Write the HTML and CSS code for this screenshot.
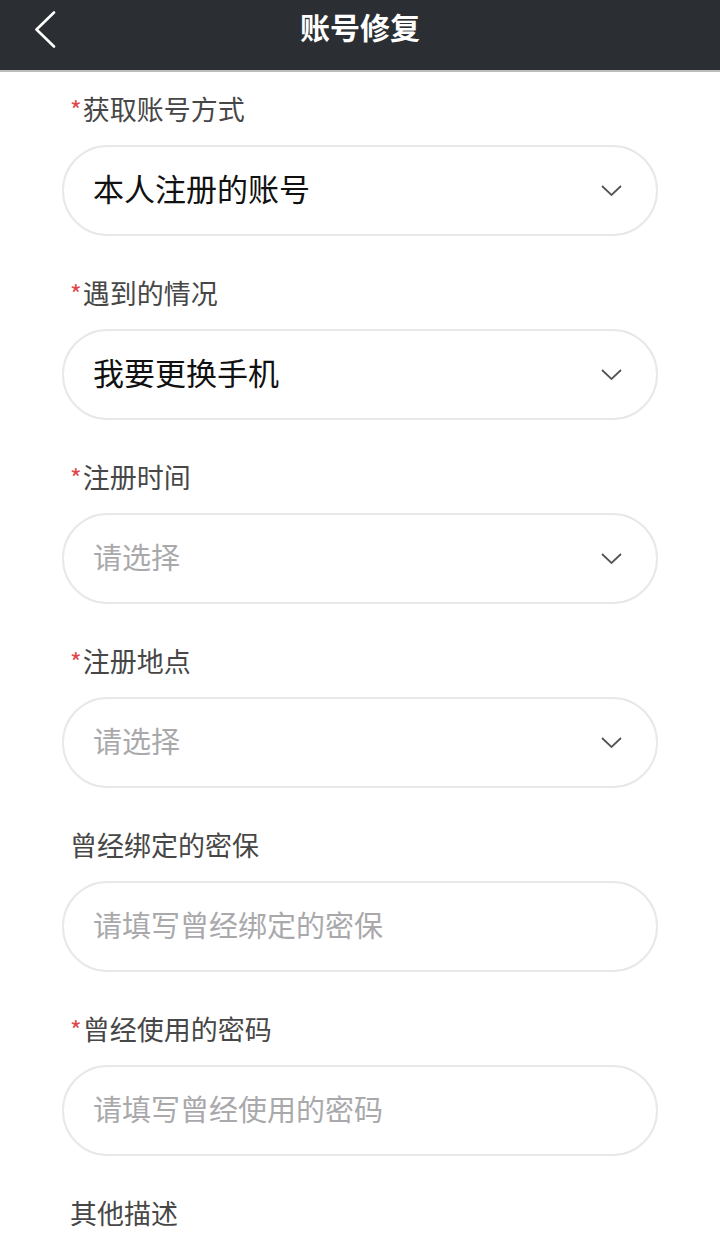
FILE: index.html
```html
<!DOCTYPE html>
<html lang="zh-CN">
<head>
<meta charset="utf-8">
<title>账号修复</title>
<link rel="stylesheet" href="styles.css">
</head>
<body>
<header class="topbar">
  <div class="back">
    <svg width="24" height="38" viewBox="0 0 24 38"><polyline points="20,1.5 2.5,18.5 20,35.5" fill="none" stroke="#ffffff" stroke-width="2.6" stroke-linecap="round" stroke-linejoin="round"/></svg>
  </div>
  <h1 class="title">账号修复</h1>
  <div class="spacer"></div>
</header>
<main class="form">
  <div class="field">
    <div class="label"><span class="req">*</span>获取账号方式</div>
    <div class="box"><span class="value">本人注册的账号</span><svg class="chev" width="21" height="11" viewBox="0 0 21 11"><polyline points="1,1 10.5,10 20,1" fill="none" stroke="#555" stroke-width="1.8"/></svg></div>
  </div>
  <div class="field">
    <div class="label"><span class="req">*</span>遇到的情况</div>
    <div class="box"><span class="value">我要更换手机</span><svg class="chev" width="21" height="11" viewBox="0 0 21 11"><polyline points="1,1 10.5,10 20,1" fill="none" stroke="#555" stroke-width="1.8"/></svg></div>
  </div>
  <div class="field">
    <div class="label"><span class="req">*</span>注册时间</div>
    <div class="box"><span class="value ph">请选择</span><svg class="chev" width="21" height="11" viewBox="0 0 21 11"><polyline points="1,1 10.5,10 20,1" fill="none" stroke="#555" stroke-width="1.8"/></svg></div>
  </div>
  <div class="field">
    <div class="label"><span class="req">*</span>注册地点</div>
    <div class="box"><span class="value ph">请选择</span><svg class="chev" width="21" height="11" viewBox="0 0 21 11"><polyline points="1,1 10.5,10 20,1" fill="none" stroke="#555" stroke-width="1.8"/></svg></div>
  </div>
  <div class="field">
    <div class="label">曾经绑定的密保</div>
    <div class="box"><span class="value ph">请填写曾经绑定的密保</span></div>
  </div>
  <div class="field">
    <div class="label"><span class="req">*</span>曾经使用的密码</div>
    <div class="box"><span class="value ph">请填写曾经使用的密码</span></div>
  </div>
  <div class="field last">
    <div class="label">其他描述</div>
  </div>
</main>
</body>
</html>
```
FILE: styles.css
```css
html, body {
  margin: 0;
  padding: 0;
  background: #ffffff;
}
body {
  font-family: "Noto Sans CJK SC", "Noto Sans", sans-serif;
  width: 720px;
  height: 1235px;
  overflow: hidden;
}
.topbar {
  height: 70px;
  background: #2b2e32;
  border-bottom: 2px solid #bcbcbc;
  display: grid;
  grid-template-columns: 1fr auto 1fr;
  align-items: start;
}
.back {
  padding: 11px 0 0 34px;
}
.back svg {
  display: block;
}
.title {
  margin: 0;
  color: #ffffff;
  font-size: 30px;
  font-weight: 700;
  line-height: 52px;
}
.form {
  padding: 19px 62px 0 62px;
}
.field {
  height: 145px;
  margin-bottom: 39px;
}
.field.last {
  height: auto;
  margin-bottom: 0;
}
.label {
  height: 36px;
  padding-left: 8px;
  font-size: 27px;
  line-height: 36px;
  color: #474747;
  margin-bottom: 18px;
}
.field.last .label {
  margin-bottom: 0;
}
.req {
  color: #e2474b;
  font-size: 25px;
  line-height: 1;
  display: inline-block;
  vertical-align: top;
  margin-top: 6px;
  margin-right: 1px;
}
.box {
  box-sizing: border-box;
  height: 91px;
  border: 2px solid #e8e8e8;
  border-radius: 46px;
  display: flex;
  align-items: center;
  justify-content: space-between;
  padding: 0 34px 0 29px;
}
.value {
  font-size: 31px;
  color: #111111;
  line-height: 40px;
  margin-top: -6px;
}
.value.ph {
  color: #a9a9ab;
  font-size: 29px;
}
.chev {
  display: block;
}
```
